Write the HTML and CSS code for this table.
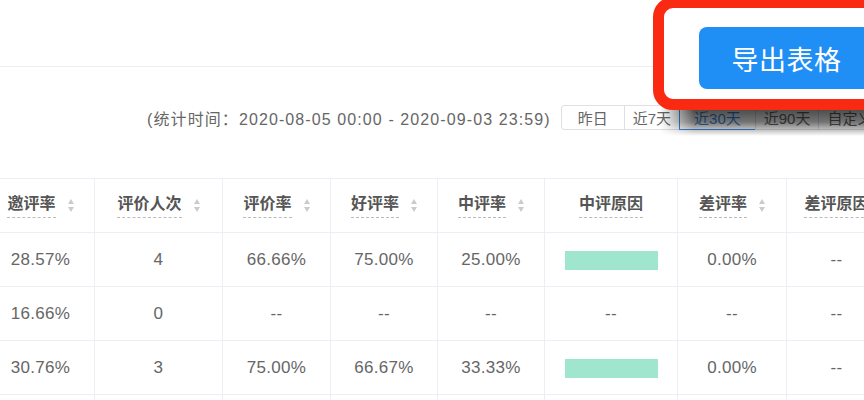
FILE: index.html
```html
<!DOCTYPE html>
<html lang="zh-CN">
<head>
    <meta charset="UTF-8">
    <meta name="viewport" content="width=device-width, initial-scale=1.0">
    <title>评价统计</title>
    <link rel="stylesheet" href="styles.css">
</head>
<body>
    <div class="page">
        <div class="topbar"></div>

        <div class="filter">
            <span class="range">(统计时间：2020-08-05 00:00 - 2020-09-03 23:59)</span>
            <div class="quick">
                <span class="quick-btn">昨日</span>
                <span class="quick-btn">近7天</span>
                <span class="quick-btn active">近30天</span>
                <span class="quick-btn">近90天</span>
                <span class="quick-btn">自定义</span>
            </div>
        </div>

        <table class="grid">
            <colgroup>
                <col style="width: 108px">
                <col style="width: 128px">
                <col style="width: 108px">
                <col style="width: 107px">
                <col style="width: 107px">
                <col style="width: 133px">
                <col style="width: 109px">
                <col style="width: 100px">
            </colgroup>
            <thead>
                <tr>
                    <th><span class="label">邀评率</span><span class="sort"></span></th>
                    <th><span class="label">评价人次</span><span class="sort"></span></th>
                    <th><span class="label">评价率</span><span class="sort"></span></th>
                    <th><span class="label">好评率</span><span class="sort"></span></th>
                    <th><span class="label">中评率</span><span class="sort"></span></th>
                    <th><span class="label">中评原因</span></th>
                    <th><span class="label">差评率</span><span class="sort"></span></th>
                    <th><span class="label">差评原因</span></th>
                </tr>
            </thead>
            <tbody>
                <tr>
                    <td>28.57%</td>
                    <td>4</td>
                    <td>66.66%</td>
                    <td>75.00%</td>
                    <td>25.00%</td>
                    <td><span class="bar"></span></td>
                    <td>0.00%</td>
                    <td class="empty">--</td>
                </tr>
                <tr>
                    <td>16.66%</td>
                    <td>0</td>
                    <td class="empty">--</td>
                    <td class="empty">--</td>
                    <td class="empty">--</td>
                    <td class="empty dark">--</td>
                    <td class="empty">--</td>
                    <td class="empty">--</td>
                </tr>
                <tr>
                    <td>30.76%</td>
                    <td>3</td>
                    <td>75.00%</td>
                    <td>66.67%</td>
                    <td>33.33%</td>
                    <td><span class="bar"></span></td>
                    <td>0.00%</td>
                    <td class="empty">--</td>
                </tr>
                <tr>
                    <td>25.00%</td>
                    <td>2</td>
                    <td>50.00%</td>
                    <td>100.00%</td>
                    <td>0.00%</td>
                    <td class="empty dark">--</td>
                    <td>0.00%</td>
                    <td class="empty">--</td>
                </tr>
            </tbody>
        </table>

        <!-- highlighted callout over the toolbar -->
        <div class="callout-shadow"></div>
        <div class="callout">
            <button class="export-btn">导出表格</button>
        </div>
    </div>
</body>
</html>
```

FILE: styles.css
```css
* {
    margin: 0;
    padding: 0;
    box-sizing: border-box;
}

body {
    font-family: "Liberation Sans", "Noto Sans CJK SC", sans-serif;
    background: #fff;
    color: #666;
}

.page {
    position: relative;
    width: 864px;
    height: 400px;
    overflow: hidden;
}

.topbar {
    height: 67px;
    border-bottom: 1px solid #eeeeee;
}

.filter {
    display: flex;
    align-items: center;
    height: 25px;
    margin-top: 38px;
    padding-left: 147px;
    white-space: nowrap;
}

.range {
    font-size: 16px;
    letter-spacing: 1.1px;
    color: #666;
    margin-right: 11px;
}

.quick {
    display: flex;
}

.quick-btn {
    display: flex;
    align-items: center;
    height: 25px;
    padding: 0 8px;
    margin-left: -1px;
    border: 1px solid #dcdfe6;
    background: #fff;
    color: #666;
    font-size: 15px;
}

.quick-btn:first-child {
    padding: 0 16px;
    border-radius: 3px 0 0 3px;
}

.quick-btn.active {
    padding: 0 14px;
    border-color: #3a8ee6;
    color: #3a8ee6;
}

.grid {
    margin-top: 48px;
    margin-left: -14px;
    width: 900px;
    table-layout: fixed;
    border-collapse: collapse;
}

.grid th,
.grid td {
    border: 1px solid #ebeef5;
    text-align: center;
    white-space: nowrap;
}

.grid th {
    height: 54px;
    font-size: 16px;
    font-weight: 600;
    color: #555;
}

.grid td {
    height: 54px;
    font-size: 17px;
    letter-spacing: 0.3px;
    color: #666;
}

.label {
    display: inline-block;
    line-height: 20px;
    padding-bottom: 3px;
    border-bottom: 1px dashed #bbb;
    vertical-align: middle;
}

.sort {
    display: inline-flex;
    flex-direction: column;
    gap: 3px;
    margin-left: 12px;
    vertical-align: middle;
}

.sort::before,
.sort::after {
    content: "";
    border-left: 3.5px solid transparent;
    border-right: 3.5px solid transparent;
}

.sort::before {
    border-bottom: 5px solid #c8cbd0;
}

.sort::after {
    border-top: 5px solid #c8cbd0;
}

.empty {
    color: #999;
}

.empty.dark {
    color: #666;
}

.bar {
    display: inline-block;
    width: 93px;
    height: 19px;
    background: #a0e6cf;
    vertical-align: middle;
}

/* soft dark shadow that falls below the callout */
.callout-shadow {
    position: absolute;
    z-index: 5;
    left: 660px;
    top: 108px;
    width: 210px;
    height: 28px;
    background: linear-gradient(to bottom, rgba(0, 0, 0, 0.72) 0%, rgba(0, 0, 0, 0.55) 50%, rgba(0, 0, 0, 0) 100%);
    -webkit-mask-image: linear-gradient(to right, transparent 0, #000 34px);
    mask-image: linear-gradient(to right, transparent 0, #000 34px);
}

.callout {
    position: absolute;
    z-index: 6;
    left: 653px;
    top: -3px;
    width: 260px;
    height: 113px;
    padding: 19px 0 0 35px;
    background: #fff;
    border: 11px solid #fa2a12;
    border-radius: 20px;
}

.export-btn {
    width: 175px;
    height: 62px;
    border: none;
    border-radius: 8px;
    background: #1f8ef5;
    color: #fff;
    font-family: "Noto Sans CJK SC", sans-serif;
    font-size: 27px;
    letter-spacing: 0.5px;
}
```
